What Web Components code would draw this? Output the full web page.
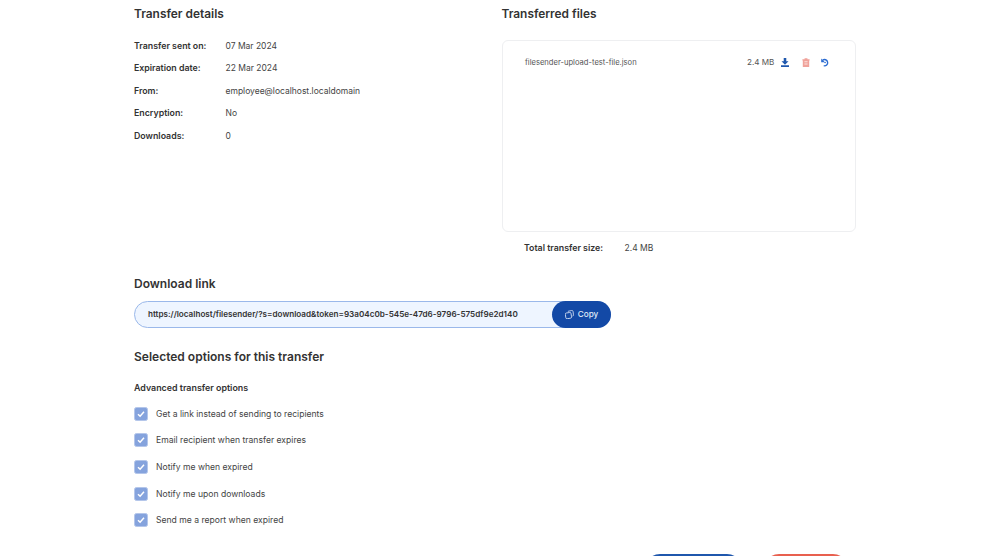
<!DOCTYPE html>
<html><head><meta charset="utf-8"><title>Transfer</title>
<style>
html,body{margin:0;padding:0;height:556px;overflow:hidden;background:#fff;font-family:Inter,"Liberation Sans",sans-serif;color:#333}
</style></head><body>
<template id="t-page"><style>
:host{display:flex;flex-direction:column;box-sizing:border-box;height:556px;padding:6px 0 0 134px;overflow:hidden}
.cols{display:grid;grid-template-columns:367.5px 354.5px;height:253px}
h2{margin:0;font:600 12px/15px Inter,sans-serif;color:#333}
.sec2{margin-top:21.5px}.sec3{margin-top:21px}
h3{margin:0;font:600 8.9px/12px Inter,sans-serif;color:#333;padding-top:18px}
.list{display:flex;flex-direction:column;gap:9px;padding-top:12.7px}
.actions{display:flex;padding-left:511px;gap:22px;margin-top:22.5px}
.b{height:30px;border-radius:15px;flex:none}
.blue{width:97px;background:#1f57ad}.red{width:84px;background:#e8604f}
</style>
<div class="cols"><slot name="left"></slot><slot name="right"></slot></div>
<div class="sec2"><h2>Download link</h2><slot name="link"></slot></div>
<div class="sec3"><h2>Selected options for this transfer</h2><h3>Advanced transfer options</h3>
<div class="list"><slot></slot></div></div>
<div class="actions"><div class="b blue"></div><div class="b red"></div></div>
</template>

<template id="t-details"><style>
:host{display:block}
h2{margin:0 0 18.5px;font:600 11.9px/15px Inter,sans-serif;color:#333}
.g{display:flex;flex-direction:column;gap:10.5px}
</style><h2>Transfer details</h2><div class="g"><slot></slot></div></template>

<template id="t-row"><style>
:host{display:grid;grid-template-columns:91.5px 1fr;align-items:baseline;font:400 8.5px/11px Inter,sans-serif;color:#444}
b{font-weight:600;font-size:8.8px;color:#333}
</style><b><slot name="k"></slot></b><span><slot></slot></span></template>

<template id="t-files"><style>
:host{display:block}
h2{margin:0 0 19px;font:600 11.9px/15px Inter,sans-serif;color:#333}
.box{box-sizing:border-box;height:192px;border:1px solid #eeeff1;border-radius:6px;padding:15px 22.5px 0}
.total{display:flex;align-items:baseline;padding:10px 0 0 22.5px;font:400 8.5px/11px Inter,sans-serif;color:#444}
.total b{font-weight:600;font-size:8.8px;color:#333;width:100.5px}
</style><h2>Transferred files</h2><div class="box"><slot></slot></div>
<div class="total"><b>Total transfer size:</b><span>2.4 MB</span></div></template>

<template id="t-file"><style>
:host{display:flex;align-items:center;height:12px;font:400 7.6px/12px Inter,sans-serif;color:#555}
.n{width:222px;white-space:nowrap;padding-top:2px}.s{width:27px;white-space:nowrap;font-size:8.1px}
svg{display:block;flex:none;width:8px;height:9px}
.i1{margin-left:7px}.i2{margin-left:13px}.i3{margin-left:11px}
</style><span class="n"><slot></slot></span><span class="s">2.4 MB</span>
<svg class="i1" viewBox="0 0 10 10" preserveAspectRatio="none"><path fill="#1f57ad" d="M3.4 0h3.2v3.6H9.4L5 7.4.6 3.6h2.8zM0 8h10v2H0z"/></svg>
<svg class="i2" viewBox="0 0 10 10" preserveAspectRatio="none"><path fill="#f0a29a" d="M.5 1.300h2.700V.2h3.600v1.100h2.700v1.400H9v7.300H1V2.700H.5z"/><path fill="#fbe3e0" d="M3 3.500h4v1.200H3zM3 6h4v1.200H3z"/></svg>
<svg class="i3" viewBox="0 0 10 10" fill="none" stroke="#2b6bd0" stroke-width="1.7"><path d="M2 2.200A3.900 3.900 0 1 1 3.400 9"/><path fill="#2b6bd0" stroke="none" d="M.2 0v4.600h4.600z"/><circle cx="5.100" cy="5" r="1" fill="#2b6bd0" stroke="none"/></svg>
</template>

<template id="t-link"><style>
:host{display:flex;align-items:stretch;box-sizing:border-box;width:477px;height:27.500px;margin-top:10px;background:#eef5ff;border:1px solid #9ab8ea;border-radius:14px;font:600 8.15px/25.500px Inter,sans-serif;color:#333}
.u{flex:1;padding-left:13px;white-space:nowrap;overflow:hidden}
.c{display:flex;align-items:center;justify-content:center;gap:4px;width:59px;margin:-1px;background:#1349a6;color:#dfe8f6;border-radius:14px;font:500 8.2px/27px Inter,sans-serif}
svg{width:9px;height:9px}
</style><span class="u"><slot></slot></span><span class="c"><svg viewBox="0 0 10 10" fill="none" stroke="#dfe8f6" stroke-width=".9"><rect x=".6" y="3" width="6.400" height="6.400" rx="1.400" transform="rotate(-8 4 6)"/><path d="M3.200 1.500 7.400.6A1.400 1.400 0 0 1 9 1.800l.4 3.600A1.300 1.300 0 0 1 8.300 6.800"/></svg>Copy</span></template>

<template id="t-check"><style>
:host{display:flex;align-items:center;gap:8px;height:14px;padding-bottom:3.7px;font:400 8.6px/14px Inter,sans-serif;color:#444}
.b{box-sizing:border-box;width:14px;height:14px;border-radius:2.5px;background:#85a3dd;border:1px solid #b4c6ea;display:flex;align-items:center;justify-content:center;flex:none}
svg{width:8px;height:8px}
</style><span class="b"><svg viewBox="0 0 8 8" fill="none" stroke="#fff" stroke-width="1.5"><path d="M1 4.200 3.100 6.200 7 1.800"/></svg></span><span><slot></slot></span></template>

<tr-page>
<tr-details slot="left">
<tr-row><span slot="k">Transfer sent on:</span>07 Mar 2024</tr-row>
<tr-row><span slot="k">Expiration date:</span>22 Mar 2024</tr-row>
<tr-row><span slot="k">From:</span>employee@localhost.localdomain</tr-row>
<tr-row><span slot="k">Encryption:</span>No</tr-row>
<tr-row><span slot="k">Downloads:</span>0</tr-row>
</tr-details>
<tr-files slot="right"><tr-file>filesender-upload-test-file.json</tr-file></tr-files>
<tr-link slot="link">https://localhost/filesender/?s=download&amp;token=93a04c0b-545e-47d6-9796-575df9e2d140</tr-link>
<tr-check>Get a link instead of sending to recipients</tr-check>
<tr-check>Email recipient when transfer expires</tr-check>
<tr-check>Notify me when expired</tr-check>
<tr-check>Notify me upon downloads</tr-check>
<tr-check>Send me a report when expired</tr-check>
</tr-page>
<script>
const defs={'tr-page':'t-page','tr-details':'t-details','tr-row':'t-row','tr-files':'t-files','tr-file':'t-file','tr-link':'t-link','tr-check':'t-check'};
for(const [n,t] of Object.entries(defs)){
  customElements.define(n,class extends HTMLElement{constructor(){super();this.attachShadow({mode:'open'}).appendChild(document.getElementById(t).content.cloneNode(true));}});
}
</script>
</body></html>
